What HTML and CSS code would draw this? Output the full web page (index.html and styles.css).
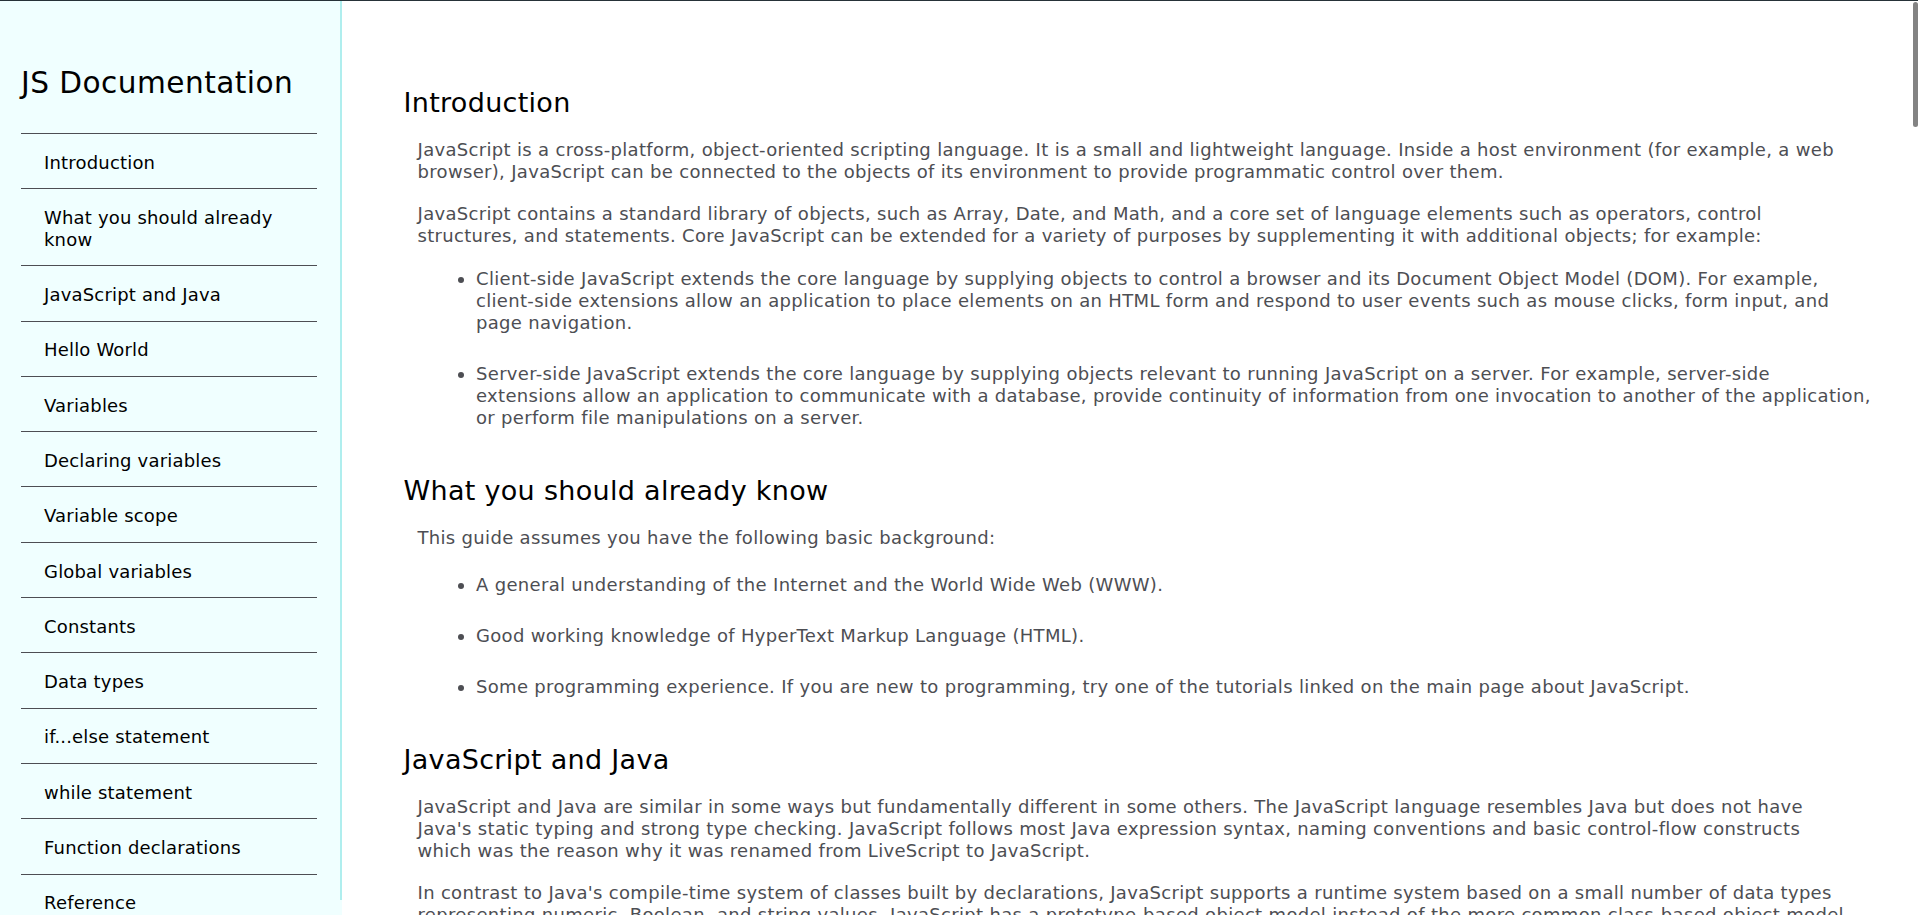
FILE: index.html
```html
<!DOCTYPE html>
<html lang="en">
<head>
<meta charset="utf-8">
<title>JS Documentation</title>
<link rel="stylesheet" href="styles.css">
</head>
<body>
<div class="page">
  <aside class="sidebar">
    <nav class="navbar">
      <header class="nav-title">JS Documentation</header>
      <ul class="nav-list">
        <li><a class="nav-link" href="#Introduction">Introduction</a></li>
        <li><a class="nav-link" href="#What_you_should_already_know">What you should already know</a></li>
        <li><a class="nav-link" href="#JavaScript_and_Java">JavaScript and Java</a></li>
        <li><a class="nav-link" href="#Hello_World">Hello World</a></li>
        <li><a class="nav-link" href="#Variables">Variables</a></li>
        <li><a class="nav-link" href="#Declaring_variables">Declaring variables</a></li>
        <li><a class="nav-link" href="#Variable_scope">Variable scope</a></li>
        <li><a class="nav-link" href="#Global_variables">Global variables</a></li>
        <li><a class="nav-link" href="#Constants">Constants</a></li>
        <li><a class="nav-link" href="#Data_types">Data types</a></li>
        <li><a class="nav-link" href="#if...else_statement">if...else statement</a></li>
        <li><a class="nav-link" href="#while_statement">while statement</a></li>
        <li><a class="nav-link" href="#Function_declarations">Function declarations</a></li>
        <li><a class="nav-link" href="#Reference">Reference</a></li>
      </ul>
    </nav>
  </aside>
  <main class="main-doc">
    <section class="main-section" id="Introduction">
      <header class="section-title">Introduction</header>
      <div class="section-body">
        <p>JavaScript is a cross-platform, object-oriented scripting language. It is a small and lightweight language. Inside a host environment (for example, a web browser), JavaScript can be connected to the objects of its environment to provide programmatic control over them.</p>
        <p>JavaScript contains a standard library of objects, such as Array, Date, and Math, and a core set of language elements such as operators, control structures, and statements. Core JavaScript can be extended for a variety of purposes by supplementing it with additional objects; for example:</p>
        <ul class="bullets bullets-first">
          <li>Client-side JavaScript extends the core language by supplying objects to control a browser and its Document Object Model (DOM). For example, client-side extensions allow an application to place elements on an HTML form and respond to user events such as mouse clicks, form input, and page navigation.</li>
          <li>Server-side JavaScript extends the core language by supplying objects relevant to running JavaScript on a server. For example, server-side extensions allow an application to communicate with a database, provide continuity of information from one invocation to another of the application, or perform file manipulations on a server.</li>
        </ul>
      </div>
    </section>
    <section class="main-section" id="What_you_should_already_know">
      <header class="section-title">What you should already know</header>
      <div class="section-body">
        <p>This guide assumes you have the following basic background:</p>
        <ul class="bullets bullets-second">
          <li>A general understanding of the Internet and the World Wide Web (WWW).</li>
          <li>Good working knowledge of HyperText Markup Language (HTML).</li>
          <li>Some programming experience. If you are new to programming, try one of the tutorials linked on the main page about JavaScript.</li>
        </ul>
      </div>
    </section>
    <section class="main-section" id="JavaScript_and_Java">
      <header class="section-title">JavaScript and Java</header>
      <div class="section-body">
        <p>JavaScript and Java are similar in some ways but fundamentally different in some others. The JavaScript language resembles Java but does not have Java's static typing and strong type checking. JavaScript follows most Java expression syntax, naming conventions and basic control-flow constructs which was the reason why it was renamed from LiveScript to JavaScript.</p>
        <p>In contrast to Java's compile-time system of classes built by declarations, JavaScript supports a runtime system based on a small number of data types representing numeric, Boolean, and string values. JavaScript has a prototype-based object model instead of the more common class-based object model. The prototype-based model provides dynamic inheritance; that is, what is inherited can vary for individual objects. JavaScript also supports functions without any special declarative requirements. Functions can be properties of objects, executing as loosely typed methods.</p>
      </div>
    </section>
  </main>
  <div class="scroll-thumb" aria-hidden="true"></div>
</div>
</body>
</html>
```

FILE: styles.css
```css
* {
  box-sizing: border-box;
}

html, body {
  margin: 0;
  padding: 0;
  height: 100%;
  overflow: hidden;
}

body {
  font-family: Verdana, "DejaVu Sans", sans-serif;
  font-size: 18px;
  background: #ffffff;
  border-top: 1px solid #263238;
}

.page {
  display: grid;
  grid-template-columns: 342px 1fr;
  height: 100%;
}

.sidebar {
  background: #f0ffff;
  overflow: hidden;
}

.navbar {
  height: 899px;
  border-right: 2px solid #afeeee;
  padding: 64px 23px 0 21px;
}

.nav-title {
  font-size: 29.6px;
  line-height: 36px;
  letter-spacing: 0.45px;
  color: #000000;
  margin: 0 0 32px;
}

.nav-list {
  list-style: none;
  margin: 0;
  padding: 0;
}

.nav-list li {
  border-top: 1px solid #4d4e53;
}

.nav-link {
  display: block;
  padding: 17.8px 0 14.8px 23px;
  line-height: 21.7px;
  letter-spacing: 0.18px;
  color: #000000;
  text-decoration: none;
}

.main-doc {
  padding: 85px 65px 40px 61.5px;
  overflow: hidden;
  color: #4d4e53;
  letter-spacing: 0.32px;
}

.main-section {
  margin-bottom: 45px;
}

.section-title {
  font-size: 27px;
  line-height: 34px;
  letter-spacing: 0.3px;
  color: #000000;
  margin: 0 0 19px;
}

.section-body {
  margin-left: 14px;
}

.section-body p {
  margin: 0 0 20px;
  line-height: 22px;
}

.section-body p:last-child {
  margin-bottom: 0;
}

.bullets {
  margin: 0 -23px 0 0;
  padding-left: 58.5px;
  line-height: 22px;
}

.bullets li + li {
  margin-top: 29.2px;
}

.bullets-first {
  margin-top: 21px;
}

.bullets-second {
  margin-top: 24.5px;
}

.scroll-thumb {
  position: fixed;
  top: 2px;
  right: 0;
  width: 5px;
  height: 125px;
  border-radius: 3px;
  background: #838383;
}
```
